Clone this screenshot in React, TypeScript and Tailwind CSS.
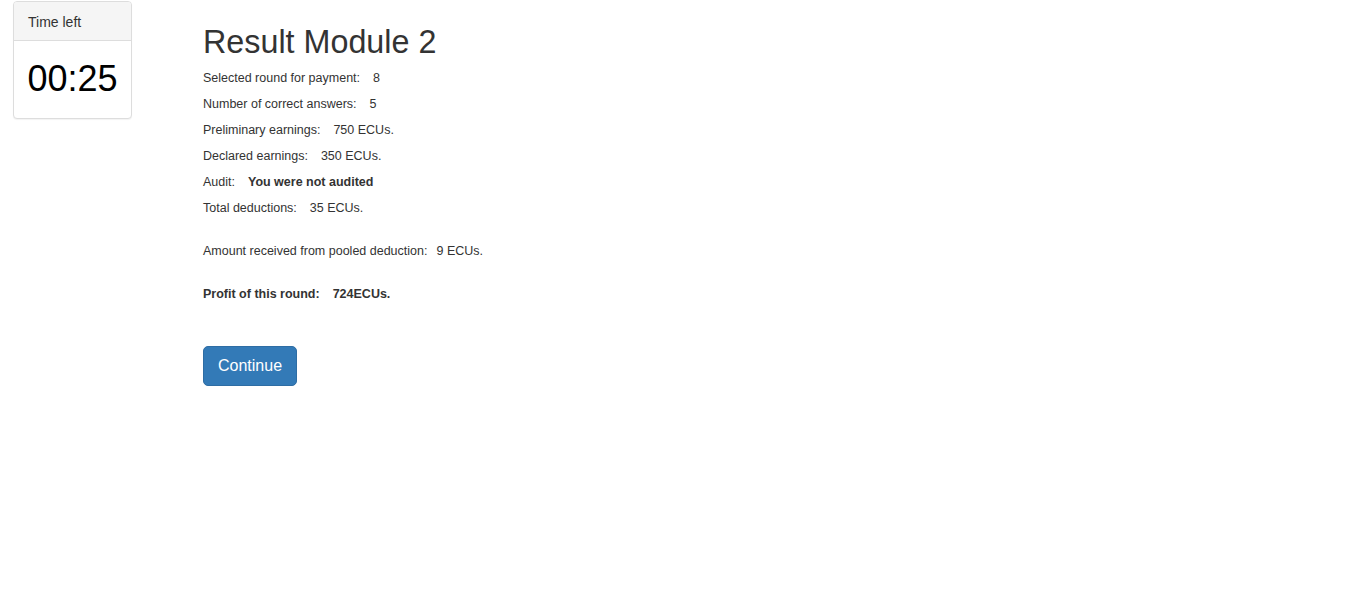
export default function App() {
  const font = { fontFamily: '"Liberation Sans", Arial, Helvetica, sans-serif' };
  return (
    <div className="min-h-[596px] w-full bg-white text-[#333] flex items-start" style={font}>
      <div className="ml-[13px] mt-[1px] w-[119px] rounded-[4px] border border-[#dddddd] bg-white shadow-[0_1px_1px_rgba(0,0,0,0.05)]">
        <div className="h-[39px] rounded-t-[3px] border-b border-[#dddddd] bg-[#f5f5f5] px-[14px] pt-[11px] text-[14px] leading-[18px] text-[#333]">
          Time left
        </div>
        <div className="h-[77px] flex items-center justify-center text-[36px] leading-[40px] text-black pb-[1px]">
          00:25
        </div>
      </div>
      <div className="ml-[71px] mt-[24px] flex flex-col items-start">
        <h1 className="text-[32.3px] leading-[36px] font-normal text-[#333]">Result Module 2</h1>
        <div className="mt-[10px] text-[12.5px] leading-[16px]">
          <p className="mb-[10px]">Selected round for payment:<span className="ml-[13px]">8</span></p>
          <p className="mb-[10px]">Number of correct answers:<span className="ml-[13px]">5</span></p>
          <p className="mb-[10px]">Preliminary earnings:<span className="ml-[13px]">750 ECUs.</span></p>
          <p className="mb-[10px]">Declared earnings:<span className="ml-[13px]">350 ECUs.</span></p>
          <p className="mb-[10px]">Audit:<span className="ml-[13px] font-bold">You were not audited</span></p>
          <p className="mb-[27px]">Total deductions:<span className="ml-[13px]">35 ECUs.</span></p>
          <p className="mb-[27px]">Amount received from pooled deduction:<span className="ml-[9px]">9 ECUs.</span></p>
          <p className="font-bold">Profit of this round:<span className="ml-[13px]">724ECUs.</span></p>
        </div>
        <button className="mt-[44px] h-[40px] rounded-[5px] border border-[#2e6da4] bg-[#337ab7] px-[14px] text-[16px] leading-[22px] text-white">
          Continue
        </button>
      </div>
    </div>
  );
}
